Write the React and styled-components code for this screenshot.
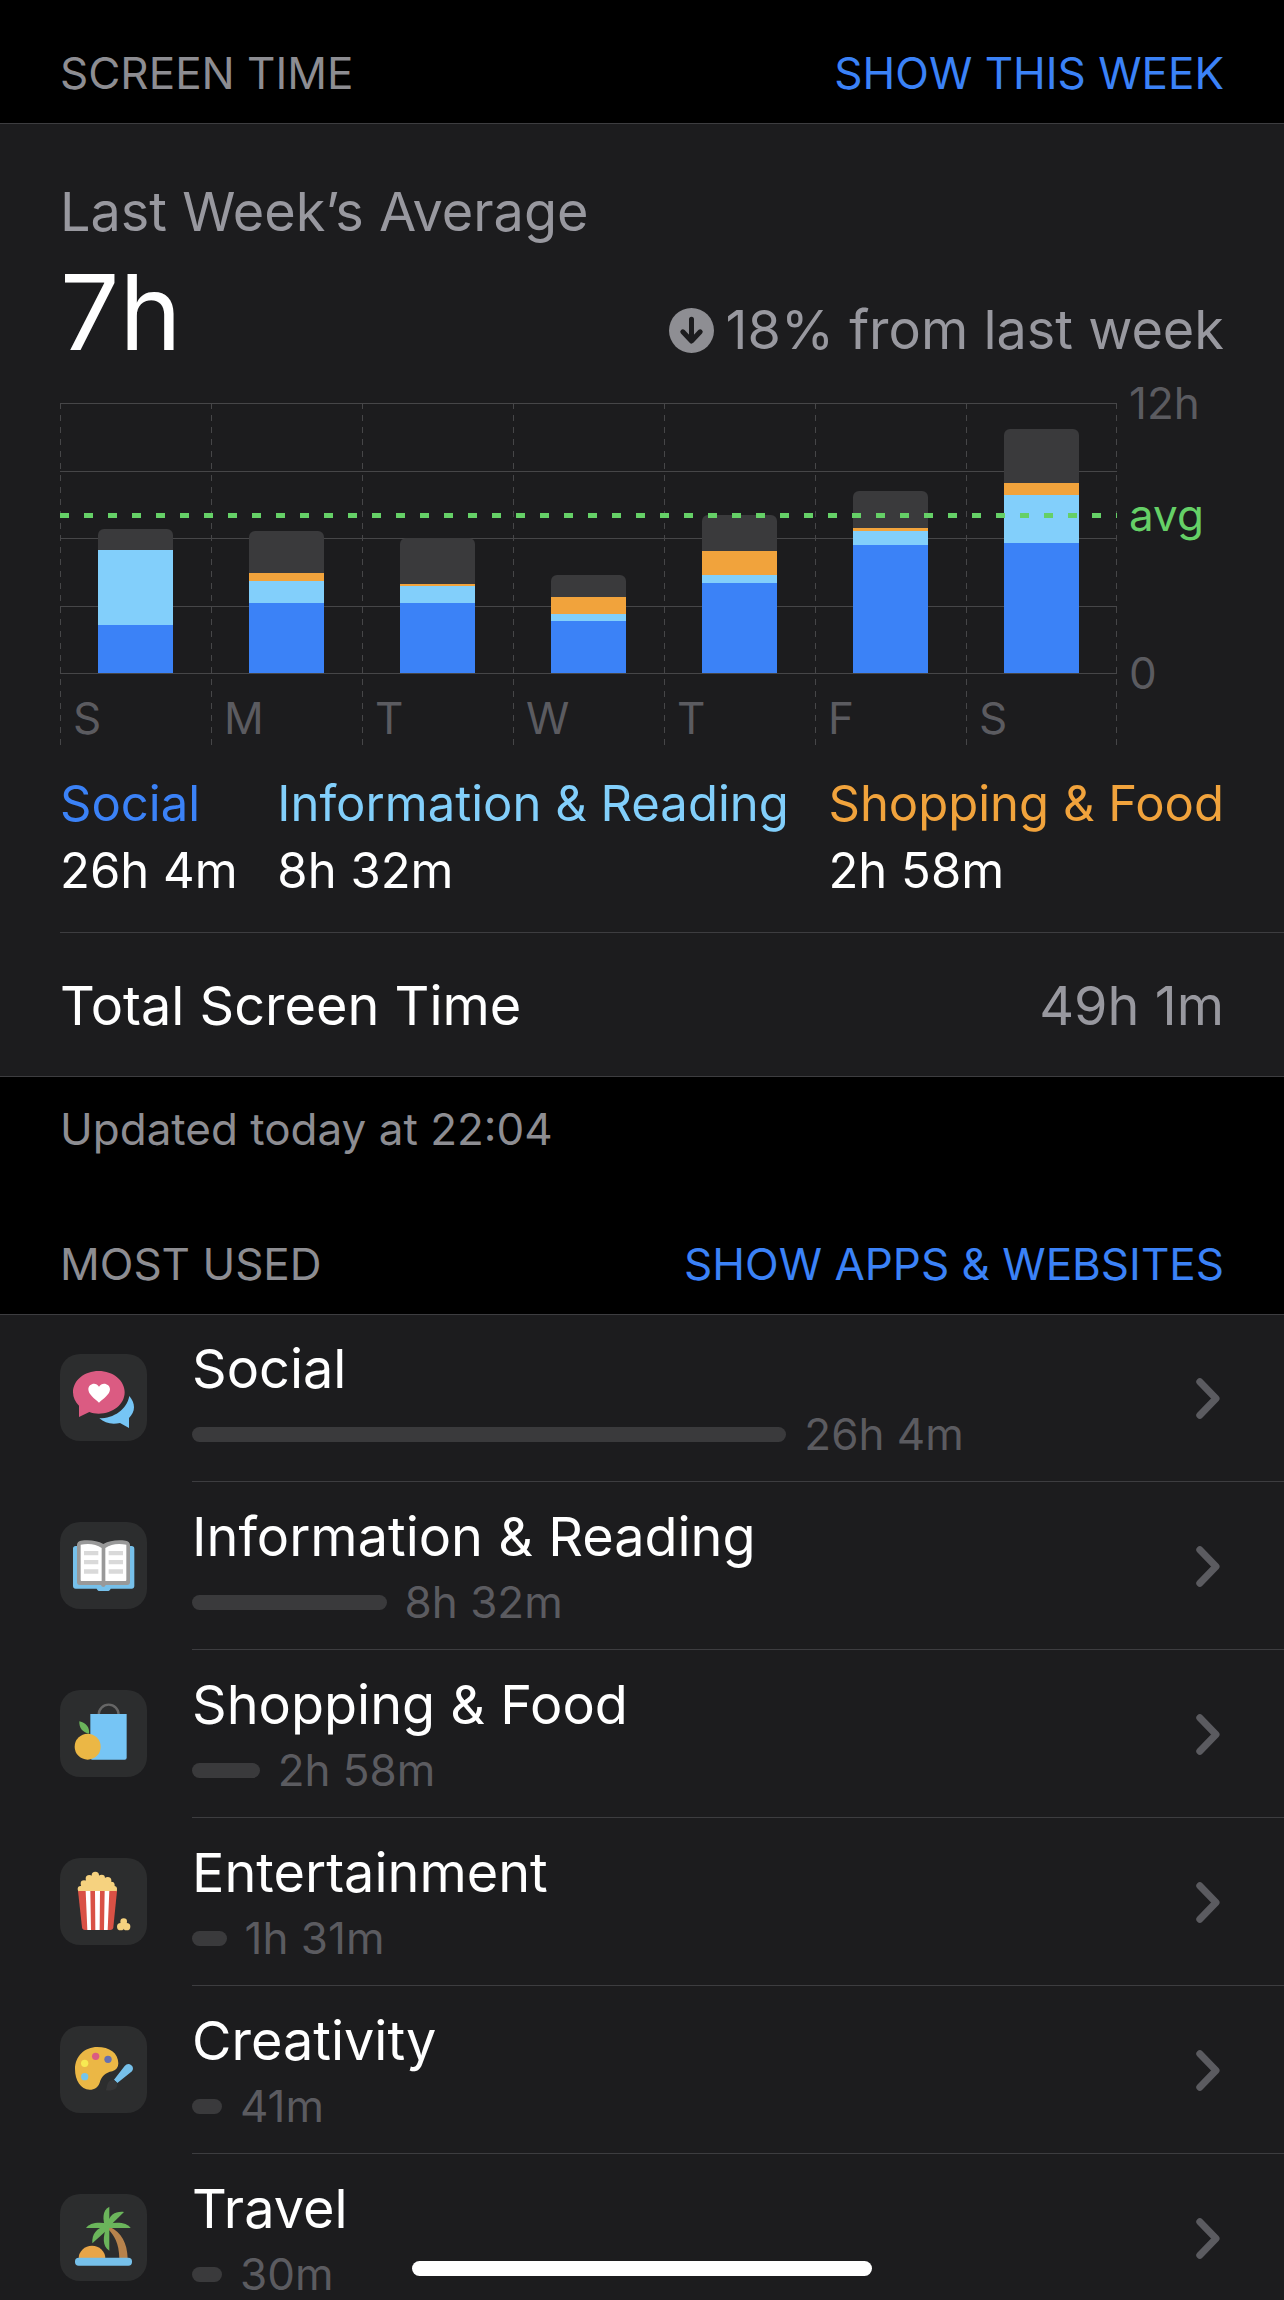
import React from "react";
import styled, { createGlobalStyle } from "styled-components";

const color = {
  panel: "#1c1c1e",
  tile: "#2c2d2e",
  line: "#3d3d40",
  grid: "#464648",
  bar: "#3a3a3c",
  faint: "#5b5b60",
  muted: "#8d8d92",
  soft: "#98989f",
  blue: "#3b82f7",
  sky: "#82cffb",
  orange: "#f1a33c",
  green: "#65d067",
};

const GlobalStyle = createGlobalStyle`
  *, *::before, *::after { box-sizing: border-box; }
  body { margin: 0; background: #000; }
  h1, h2, h3, p, ul, dl, dd { margin: 0; padding: 0; font-weight: 400; }
`;

const Screen = styled.main`
  height: 100vh;
  overflow-y: auto;
  scrollbar-width: none;
  background: #000;
  color: #fff;
  font-family: Inter, "Liberation Sans", sans-serif;
  font-size: 54px;
  line-height: 68px;
`;

const SectionHeader = styled.header`
  display: flex;
  justify-content: space-between;
  gap: 24px;
  padding: 46px 60px 23px;
  font-size: 44px;
  line-height: 54px;
`;

const SectionTitle = styled.h2`
  color: ${color.muted};
  font-size: inherit;
`;

const SectionAction = styled.button`
  padding: 0;
  border: 0;
  background: none;
  color: ${color.blue};
  font: inherit;
  cursor: pointer;
`;

const Panel = styled.section`
  background: ${color.panel};
  border-top: 1px solid ${color.line};
  border-bottom: 1px solid ${color.line};
`;

const Summary = styled.div`
  padding: 54px 60px 28px;
`;

const SummaryTitle = styled.h3`
  color: ${color.soft};
  font-size: inherit;
`;

const AverageRow = styled.div`
  display: flex;
  justify-content: space-between;
  align-items: flex-end;
  margin-top: 6px;
`;

const Average = styled.p`
  font-size: 105px;
  line-height: 120px;
`;

const Trend = styled.p`
  display: flex;
  align-items: center;
  gap: 12px;
  padding-bottom: 8px;
  color: ${color.soft};
`;

const Chart = styled.div`
  display: grid;
  grid-template-columns: 1fr 107px;
  margin-top: 31px;
`;

const Plot = styled.div`
  position: relative;
  display: grid;
  grid-template-columns: repeat(7, 1fr);
`;

const dashes = `repeating-linear-gradient(${color.grid} 0 6px, transparent 6px 12px)`;

const Day = styled.section`
  background: ${dashes} left / 1px 100% no-repeat;

  &:last-of-type {
    background: ${dashes} left / 1px 100% no-repeat,
      ${dashes} right / 1px 100% no-repeat;
  }
`;

const BarArea = styled.div`
  position: relative;
  display: flex;
  justify-content: center;
  align-items: flex-end;
  height: 270px;
`;

const Stack = styled.div`
  display: flex;
  flex-direction: column-reverse;
  width: 50%;
  height: 100%;
  overflow: hidden;
`;

const Segment = styled.span`
  flex: none;
  background: ${(p) => p.$fill};
  border-radius: ${(p) => (p.$top ? "6px 6px 0 0" : "0")};
`;

const DayName = styled.p`
  margin-top: 18px;
  padding-left: 13px;
  color: ${color.faint};
  font-size: 44px;
  line-height: 54px;
`;

const GridLines = styled.div`
  position: absolute;
  top: 0;
  left: 0;
  right: 0;
  height: 271px;
  display: flex;
  flex-direction: column;
  justify-content: space-between;
`;

const GridLine = styled.span`
  height: 1px;
  background: ${color.grid};
`;

const AverageLayer = styled.div`
  position: absolute;
  top: 0;
  left: 0;
  right: 0;
  height: 270px;
`;

const AverageLine = styled.span`
  position: absolute;
  left: 0;
  right: 0;
  height: 5px;
  margin-bottom: -2px;
  background: repeating-linear-gradient(90deg, ${color.green} 0 9px, transparent 9px 24px);
`;

const Axis = styled.div`
  display: grid;
  grid-template-rows: 112px 158px auto;
  margin-top: -27px;
  padding-left: 12px;
  font-size: 44px;
  line-height: 54px;
`;

const AxisLabel = styled.span`
  color: ${(p) => (p.$average ? color.green : color.faint)};
`;

const Legend = styled.dl`
  display: flex;
  justify-content: space-between;
  margin-top: 25px;
  font-size: 49px;
  line-height: 67px;
`;

const LegendName = styled.dt`
  color: ${(p) => p.$tone};
`;

const TotalRow = styled.div`
  display: flex;
  justify-content: space-between;
  margin-left: 60px;
  padding: 39px 60px 36px 0;
  border-top: 1px solid ${color.line};
`;

const TotalValue = styled.span`
  color: ${color.soft};
`;

const Updated = styled.p`
  padding: 25px 60px 35px;
  color: ${color.muted};
  font-size: 44px;
  line-height: 54px;
`;

const List = styled.ul`
  list-style: none;
  background: ${color.panel};
  box-shadow: inset 0 1px ${color.line};
`;

const Row = styled.a`
  display: flex;
  align-items: center;
  gap: 45px;
  padding-left: 60px;
  color: inherit;
  text-decoration: none;
`;

const Tile = styled.span`
  display: block;
  flex: none;
  width: 87px;
  height: 87px;
  margin-bottom: 2px;
  border-radius: 20px;
  background: ${color.tile};
  overflow: hidden;

  svg { display: block; width: 100%; height: 100%; }
`;

const RowBody = styled.span`
  flex: 1;
  display: flex;
  align-items: center;
  padding: 21px 64px 20px 0;
  border-bottom: 1px solid ${color.line};
`;

const RowText = styled.span`
  flex: 1;
  display: flex;
  flex-direction: column;
  gap: 4px;
`;

const Usage = styled.span`
  display: flex;
  align-items: center;
  gap: 18px;
  color: ${color.faint};
  font-size: 44px;
  line-height: 54px;
`;

const UsageBar = styled.span`
  flex: none;
  min-width: 30px;
  height: 15px;
  border-radius: 8px;
  background: ${color.bar};
`;

const HomeIndicator = styled.div`
  position: fixed;
  bottom: 24px;
  left: 50%;
  width: 460px;
  height: 15px;
  border-radius: 8px;
  background: #fff;
  transform: translateX(-50%);
`;

const ArrowDown = () => (
  <svg width="45" height="45" viewBox="0 0 45 45" aria-label="Down" role="img">
    <circle cx="22.5" cy="22.5" r="22.5" fill="#8e8e93" />
    <path d="M22.5 11.2V32M13.8 23.8l8.7 9.2 8.7-9.2" fill="none" stroke={color.panel} strokeWidth="5" strokeLinecap="round" strokeLinejoin="round" />
  </svg>
);

const Chevron = () => (
  <svg width="24" height="41" viewBox="0 0 24 41" aria-hidden="true">
    <path d="M3.8 3.8 20 20.5 3.8 37.2" fill="none" stroke={color.faint} strokeWidth="7" strokeLinecap="round" strokeLinejoin="round" />
  </svg>
);

const SocialIcon = () => (
  <svg viewBox="0 0 261 261" aria-hidden="true">
    <path d="M116 51c43 0 78 28 78 64s-35 64-78 64c-10 0-20-2-28-5l-31 15v-34c-11-11-18-24-18-40 0-36 34-64 77-64z" fill="#db5b82" />
    <path d="M117 146C103 134 85 121 85 106c0-17 23-24 32-8 9-16 33-9 33 8 0 15-19 28-33 40z" fill="#fff" />
    <path d="M208 126c10 12 14 22 14 34 0 13-6 23-15 32v30l-27-15c-25 6-46 0-62-14 44 0 82-26 90-67z" fill="#76c5f5" />
  </svg>
);

const BookIcon = () => (
  <svg viewBox="0 0 261 261" aria-hidden="true">
    <path d="M47 72h168c5 0 8 3 8 8v112c0 5-3 8-8 8h-63c-2 5-5 7-9 7h-24c-4 0-7-2-9-7H47c-5 0-8-3-8-8V80c0-5 3-8 8-8z" fill="#76c0ea" />
    <path d="M51 69c0-7 4-12 12-13 27-3 49 0 67 10 18-10 40-13 67-10 8 1 13 6 13 13v112c0 5-3 8-8 8h-65c-1 4-4 6-7 6s-6-2-7-6H59c-5 0-8-3-8-8z" fill="#999" />
    <path d="M62 68c25-5 46-2 63 10v99H66c-3 0-4-1-4-4zM199 68c-25-5-46-2-63 10v99h59c3 0 4-1 4-4z" fill="#fff" />
    <path d="M72 87h43v13H72zM72 114h43v13H72zM72 142h43v13H72zM146 87h43v13h-43zM146 114h43v13h-43zM146 142h43v13h-43z" fill="#d9d9d9" />
  </svg>
);

const ShoppingIcon = () => (
  <svg viewBox="0 0 261 261" aria-hidden="true">
    <circle cx="146" cy="74" r="30" fill="none" stroke="#666" strokeWidth="7" />
    <path d="M91 72h109v131q0 6-6 6H97q-6 0-6-6z" fill="#76c5f5" />
    <circle cx="83" cy="170" r="39" fill="#ebb745" />
    <path d="M58 94c21 5 31 18 29 37-20-4-30-17-29-37z" fill="#6bb55b" />
  </svg>
);

const PopcornIcon = () => (
  <svg viewBox="0 0 261 261" aria-hidden="true">
    <g fill="#f6d27f">
      <path d="M54 101 66 78l22-20 18-8 20 6 24 12 18 22 3 11z" />
      <circle cx="62" cy="93" r="9" />
      <circle cx="72" cy="77" r="10" />
      <circle cx="88" cy="62" r="11" />
      <circle cx="106" cy="52" r="11" />
      <circle cx="125" cy="60" r="10" />
      <circle cx="143" cy="68" r="11" />
      <circle cx="154" cy="81" r="10" />
      <circle cx="162" cy="93" r="9" />
      <circle cx="191" cy="191" r="10" />
      <circle cx="182" cy="206" r="11" />
      <circle cx="200" cy="206" r="11" />
    </g>
    <path d="M54 99h117l-11 109q-1 8-9 8H75q-8 0-9-8z" fill="#d95145" />
    <path d="M77 99h14l2 117H82zM105 99h15l-1 117h-13zM134 99h14l-5 117h-11z" fill="#fff" />
  </svg>
);

const PaletteIcon = () => (
  <svg viewBox="0 0 261 261" aria-hidden="true">
    <path d="M112 63c36 0 63 18 63 49 0 12-6 20-18 24-21 4-32 15-38 34-5 14-15 21-30 21-27 0-44-28-44-62 0-38 29-66 67-66z" fill="#ebb745" />
    <circle cx="74" cy="112" r="11" fill="#f7ea52" />
    <circle cx="107" cy="91" r="11" fill="#db5b82" />
    <circle cx="144" cy="100" r="11" fill="#6670b0" />
    <circle cx="74" cy="152" r="11" fill="#76c5ea" />
    <path d="m162 161 32-41c6-7 13-8 19-3 7 5 8 12 3 19l-44 35z" fill="#76c0ea" />
    <path d="M158 162c8 1 13 6 14 13 0 15-14 21-35 18 6-6 0-29 21-31z" fill="#363637" />
  </svg>
);

const TravelIcon = () => (
  <svg viewBox="0 0 261 261" aria-hidden="true">
    <path d="M56 193a40 38 0 0 1 80 0z" fill="#e8a548" />
    <path d="M143 104c20 20 34 42 35 89h25c-1-45-19-78-53-94z" fill="#b8834c" />
    <g fill="#6bb55b">
      <path d="M148 38c-23 11-19 40-13 60l13-6z" />
      <path d="M192 54c-25-3-43 9-49 32l7 9z" />
      <path d="M212 102c-8-15-38-20-66-13l-6 13z" />
      <path d="M78 102c8-15 38-20 66-13l6 13z" />
      <path d="M97 148c-2-28 12-45 43-54l8 8z" />
      <path d="M148 170c-22-12-19-44-9-70l9-4z" />
    </g>
    <rect x="45" y="191" width="171" height="24" rx="11" fill="#76c0ea" />
  </svg>
);

const days = [
  { name: "S", minutes: [128, 200, 0, 56] },
  { name: "M", minutes: [187, 59, 21, 112] },
  { name: "T", minutes: [187, 45, 5, 123] },
  { name: "W", minutes: [139, 19, 45, 59] },
  { name: "T", minutes: [240, 21, 64, 96] },
  { name: "F", minutes: [341, 37, 8, 99] },
  { name: "S", minutes: [347, 128, 32, 144] },
];
const fills = [color.blue, color.sky, color.orange, color.bar];
const scaleMinutes = 720;
const averageMinutes = 420;

const legend = [
  { name: "Social", time: "26h 4m", tone: color.blue },
  { name: "Information & Reading", time: "8h 32m", tone: color.sky },
  { name: "Shopping & Food", time: "2h 58m", tone: color.orange },
];

const categories = [
  { name: "Social", time: "26h 4m", minutes: 1564, Icon: SocialIcon },
  { name: "Information & Reading", time: "8h 32m", minutes: 512, Icon: BookIcon },
  { name: "Shopping & Food", time: "2h 58m", minutes: 178, Icon: ShoppingIcon },
  { name: "Entertainment", time: "1h 31m", minutes: 91, Icon: PopcornIcon },
  { name: "Creativity", time: "41m", minutes: 41, Icon: PaletteIcon },
  { name: "Travel", time: "30m", minutes: 30, Icon: TravelIcon },
];
const longestBar = 59.2;

function WeekChart() {
  return (
    <Chart>
      <Plot>
        <GridLines>
          {[0, 1, 2, 3, 4].map((n) => <GridLine key={n} />)}
        </GridLines>
        {days.map((day, i) => (
          <Day key={i}>
            <BarArea>
              <Stack>
                {day.minutes.map((m, k) => (
                  <Segment
                    key={k}
                    $fill={fills[k]}
                    $top={k === 3}
                    style={{ height: `${(m / scaleMinutes) * 100}%` }}
                  />
                ))}
              </Stack>
            </BarArea>
            <DayName>{day.name}</DayName>
          </Day>
        ))}
        <AverageLayer>
          <AverageLine style={{ bottom: `${(averageMinutes / scaleMinutes) * 100}%` }} />
        </AverageLayer>
      </Plot>
      <Axis>
        <AxisLabel>12h</AxisLabel>
        <AxisLabel $average>avg</AxisLabel>
        <AxisLabel>0</AxisLabel>
      </Axis>
    </Chart>
  );
}

export default function App() {
  return (
    <>
      <GlobalStyle />
      <Screen>
        <SectionHeader>
          <SectionTitle>SCREEN TIME</SectionTitle>
          <SectionAction type="button">SHOW THIS WEEK</SectionAction>
        </SectionHeader>
        <Panel>
          <Summary>
            <SummaryTitle>Last Week’s Average</SummaryTitle>
            <AverageRow>
              <Average>7h</Average>
              <Trend>
                <ArrowDown />
                18% from last week
              </Trend>
            </AverageRow>
            <WeekChart />
            <Legend>
              {legend.map((item) => (
                <div key={item.name}>
                  <LegendName $tone={item.tone}>{item.name}</LegendName>
                  <dd>{item.time}</dd>
                </div>
              ))}
            </Legend>
          </Summary>
          <TotalRow>
            <span>Total Screen Time</span>
            <TotalValue>49h 1m</TotalValue>
          </TotalRow>
        </Panel>
        <Updated>Updated today at 22:04</Updated>
        <SectionHeader>
          <SectionTitle>MOST USED</SectionTitle>
          <SectionAction type="button">SHOW APPS &amp; WEBSITES</SectionAction>
        </SectionHeader>
        <List>
          {categories.map(({ name, time, minutes, Icon }) => (
            <li key={name}>
              <Row href="#">
                <Tile><Icon /></Tile>
                <RowBody>
                  <RowText>
                    <span>{name}</span>
                    <Usage>
                      <UsageBar style={{ width: `${(minutes / categories[0].minutes) * longestBar}%` }} />
                      {time}
                    </Usage>
                  </RowText>
                  <Chevron />
                </RowBody>
              </Row>
            </li>
          ))}
        </List>
        <HomeIndicator />
      </Screen>
    </>
  );
}
